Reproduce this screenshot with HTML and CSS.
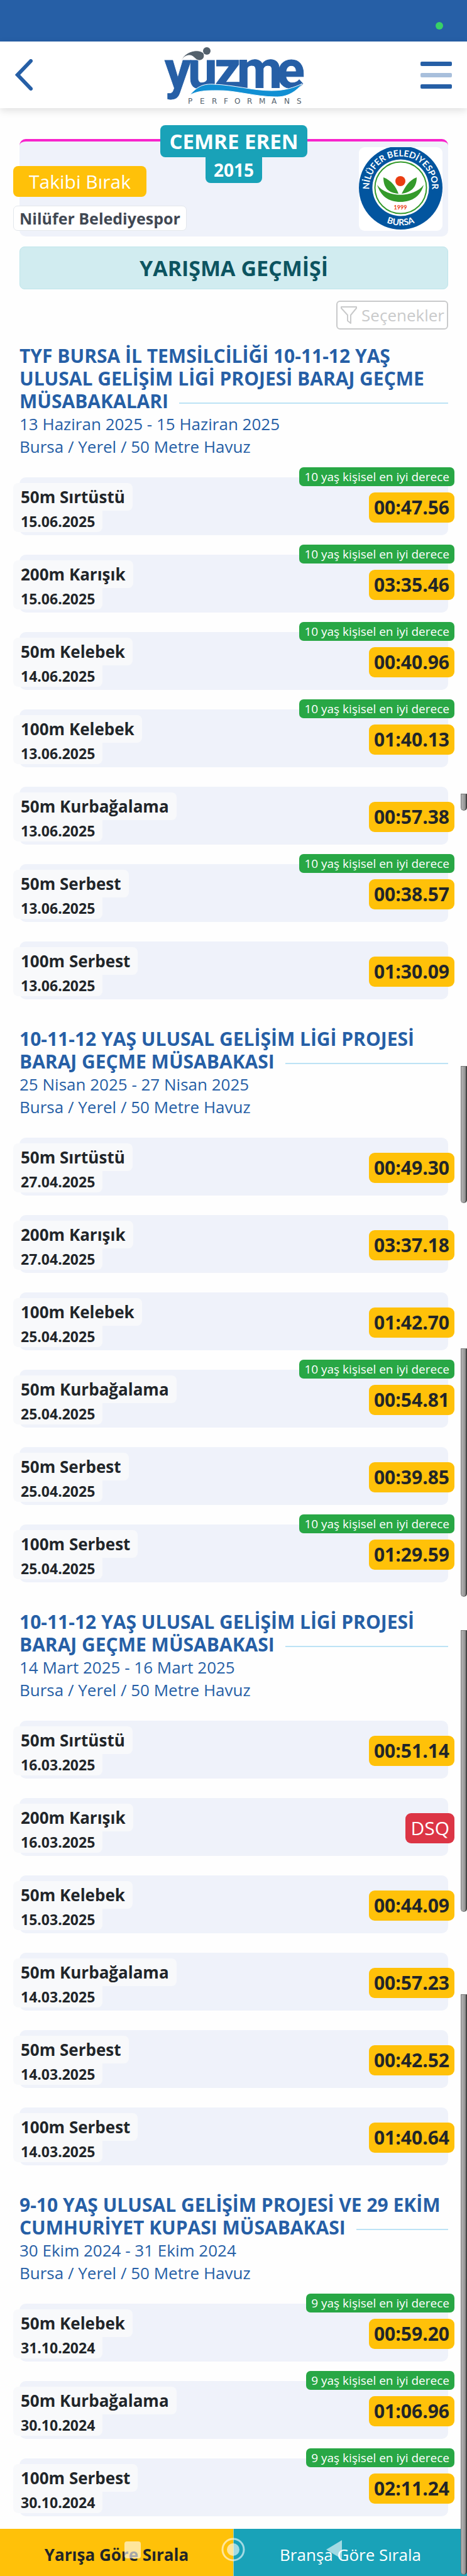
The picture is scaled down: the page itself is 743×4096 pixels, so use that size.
FILE: index.html
```html
<!DOCTYPE html>
<html lang="tr">
<head>
<meta charset="utf-8">
<meta name="viewport" content="width=device-width, initial-scale=1">
<title>Yarışma Geçmişi</title>
<link rel="stylesheet" href="styles.css">
</head>
<body>
<div class="status-bar"><span class="status-dot"></span></div>

<header class="topbar">
  <a class="back" href="#" aria-label="Geri">
    <svg width="28" height="50" viewBox="0 0 28 50"><path d="M25 3 L4 25 L25 47" fill="none" stroke="#265fa6" stroke-width="6" stroke-linecap="round"/></svg>
  </a>
  <svg class="brand" width="220" height="92" viewBox="0 0 220 92" role="img" aria-label="Yüzme Performans">
    <text class="brand-word" x="0 37 79 115 178" y="67">yuzme</text>
    <path d="M26 25 C30 10 50 4 60 10 C66 14 62 24 54 23 C48 22 46 14 38 15 C32 16 29 19 26 25 Z" fill="#54616c" stroke="#fff" stroke-width="1"/>
    <circle cx="67" cy="8" r="6" fill="#54616c"/>
    <path d="M40 78 C52 64 62 60 78 61 C110 62 140 71 170 71 C192 71 206 66 219 60 C210 72 195 82 176 81 C145 81 110 70 84 71 C66 71 54 71 40 78 Z" fill="#118fd3" stroke="#fff" stroke-width="1"/>
    <text class="brand-sub" y="92" x="37 56 75 94 111 131 150 170 190 210">PERFORMANS</text>
  </svg>
  <button class="menu" type="button" aria-label="Menü"><span></span><span></span><span></span></button>
</header>

<main>
  <section class="profile">
    <div class="profile-id">
      <h1 class="profile-name">CEMRE EREN</h1>
      <span class="profile-year">2015</span>
    </div>
    <div class="profile-side">
      <button class="follow" type="button">Takibi Bırak</button>
      <span class="club">Nilüfer Belediyespor</span>
    </div>
    <svg class="club-logo" width="133" height="133" viewBox="0 0 133 133" role="img" aria-label="Nilüfer Belediyespor Bursa">
      <defs>
        <path id="arc-top" d="M17.3 73.4 A50 50 0 1 1 115.7 73.4"/>
        <path id="arc-bottom" d="M6.5 64.5 A60 60 0 0 0 126.5 64.5"/>
      </defs>
      <rect width="133" height="133" fill="#fff"/>
      <circle cx="66.5" cy="64.5" r="66.5" fill="#02559f"/>
      <circle cx="66.5" cy="64.5" r="45" fill="#fff"/>
      <circle cx="66.5" cy="64.5" r="41" fill="none" stroke="#349a2b" stroke-width="2"/>
      <circle cx="66" cy="54" r="8" fill="#ea3d12"/>
      <path d="M39 48 C52 53 59 63 63 74 C48 73 39 66 39 48 Z" fill="#349a2b"/>
      <path d="M92 48 C79 53 74 63 68 74 C83 72 92 64 92 48 Z" fill="#349a2b"/>
      <path d="M29 60 C45 81 87 81 103 60 C98 78 85 87 66 87 C47 87 35 78 29 60 Z" fill="#349a2b"/>
      <text class="logo-year" x="66" y="99">1999</text>
      <text class="logo-text"><textPath href="#arc-top" startOffset="50%">NİLÜFER BELEDİYESPOR</textPath></text>
      <text class="logo-text"><textPath href="#arc-bottom" startOffset="50%">BURSA</textPath></text>
    </svg>
  </section>

  <h2 class="page-title">YARIŞMA GEÇMİŞİ</h2>

  <button class="options" type="button">
    <svg width="28" height="30" viewBox="0 0 28 30"><path d="M2 2 H26 V4 L17 15 V28 L12 24 V15 L2 4 Z" fill="none" stroke="#c9cacb" stroke-width="2" stroke-linejoin="round"/></svg>
    Seçenekler
  </button>

  <section class="meet">
    <h3>TYF BURSA İL TEMSİLCİLİĞİ 10-11-12 YAŞ ULUSAL GELİŞİM LİGİ PROJESİ BARAJ GEÇME MÜSABAKALARI</h3>
    <p>13 Haziran 2025 - 15 Haziran 2025</p>
    <p>Bursa / Yerel / 50 Metre Havuz</p>
    <ul class="races">
      <li><div><b class="event">50m Sırtüstü</b><time>15.06.2025</time></div><span class="best">10 yaş kişisel en iyi derece</span><strong class="result">00:47.56</strong></li>
      <li><div><b class="event">200m Karışık</b><time>15.06.2025</time></div><span class="best">10 yaş kişisel en iyi derece</span><strong class="result">03:35.46</strong></li>
      <li><div><b class="event">50m Kelebek</b><time>14.06.2025</time></div><span class="best">10 yaş kişisel en iyi derece</span><strong class="result">00:40.96</strong></li>
      <li><div><b class="event">100m Kelebek</b><time>13.06.2025</time></div><span class="best">10 yaş kişisel en iyi derece</span><strong class="result">01:40.13</strong></li>
      <li><div><b class="event">50m Kurbağalama</b><time>13.06.2025</time></div><strong class="result">00:57.38</strong></li>
      <li><div><b class="event">50m Serbest</b><time>13.06.2025</time></div><span class="best">10 yaş kişisel en iyi derece</span><strong class="result">00:38.57</strong></li>
      <li><div><b class="event">100m Serbest</b><time>13.06.2025</time></div><strong class="result">01:30.09</strong></li>
    </ul>
  </section>

  <section class="meet">
    <h3>10-11-12 YAŞ ULUSAL GELİŞİM LİGİ PROJESİ BARAJ GEÇME MÜSABAKASI</h3>
    <p>25 Nisan 2025 - 27 Nisan 2025</p>
    <p>Bursa / Yerel / 50 Metre Havuz</p>
    <ul class="races">
      <li><div><b class="event">50m Sırtüstü</b><time>27.04.2025</time></div><strong class="result">00:49.30</strong></li>
      <li><div><b class="event">200m Karışık</b><time>27.04.2025</time></div><strong class="result">03:37.18</strong></li>
      <li><div><b class="event">100m Kelebek</b><time>25.04.2025</time></div><strong class="result">01:42.70</strong></li>
      <li><div><b class="event">50m Kurbağalama</b><time>25.04.2025</time></div><span class="best">10 yaş kişisel en iyi derece</span><strong class="result">00:54.81</strong></li>
      <li><div><b class="event">50m Serbest</b><time>25.04.2025</time></div><strong class="result">00:39.85</strong></li>
      <li><div><b class="event">100m Serbest</b><time>25.04.2025</time></div><span class="best">10 yaş kişisel en iyi derece</span><strong class="result">01:29.59</strong></li>
    </ul>
  </section>

  <section class="meet">
    <h3>10-11-12 YAŞ ULUSAL GELİŞİM LİGİ PROJESİ BARAJ GEÇME MÜSABAKASI</h3>
    <p>14 Mart 2025 - 16 Mart 2025</p>
    <p>Bursa / Yerel / 50 Metre Havuz</p>
    <ul class="races">
      <li><div><b class="event">50m Sırtüstü</b><time>16.03.2025</time></div><strong class="result">00:51.14</strong></li>
      <li><div><b class="event">200m Karışık</b><time>16.03.2025</time></div><strong class="result dsq">DSQ</strong></li>
      <li><div><b class="event">50m Kelebek</b><time>15.03.2025</time></div><strong class="result">00:44.09</strong></li>
      <li><div><b class="event">50m Kurbağalama</b><time>14.03.2025</time></div><strong class="result">00:57.23</strong></li>
      <li><div><b class="event">50m Serbest</b><time>14.03.2025</time></div><strong class="result">00:42.52</strong></li>
      <li><div><b class="event">100m Serbest</b><time>14.03.2025</time></div><strong class="result">01:40.64</strong></li>
    </ul>
  </section>

  <section class="meet">
    <h3>9-10 YAŞ ULUSAL GELİŞİM PROJESİ VE 29 EKİM CUMHURİYET KUPASI MÜSABAKASI</h3>
    <p>30 Ekim 2024 - 31 Ekim 2024</p>
    <p>Bursa / Yerel / 50 Metre Havuz</p>
    <ul class="races">
      <li><div><b class="event">50m Kelebek</b><time>31.10.2024</time></div><span class="best">9 yaş kişisel en iyi derece</span><strong class="result">00:59.20</strong></li>
      <li><div><b class="event">50m Kurbağalama</b><time>30.10.2024</time></div><span class="best">9 yaş kişisel en iyi derece</span><strong class="result">01:06.96</strong></li>
      <li><div><b class="event">100m Serbest</b><time>30.10.2024</time></div><span class="best">9 yaş kişisel en iyi derece</span><strong class="result">02:11.24</strong></li>
    </ul>
  </section>
</main>

<footer class="sortbar">
  <button class="sort by-race" type="button">Yarışa Göre Sırala</button>
  <button class="sort by-stroke" type="button">Branşa Göre Sırala</button>
  <svg class="nav-keys" width="350" height="42" viewBox="0 0 350 42" aria-hidden="true">
    <rect x="1" y="8" width="26" height="27" rx="4" fill="#fff" fill-opacity=".6"/>
    <circle cx="174" cy="21" r="17" fill="none" stroke="#fff" stroke-opacity=".6" stroke-width="3"/>
    <circle cx="174" cy="21" r="10" fill="#fff" fill-opacity=".6"/>
    <path d="M347 6 V36 L322 21 Z" fill="#fff" fill-opacity=".6"/>
  </svg>
</footer>

<i class="thumb thumb-1"></i>
<i class="thumb thumb-2"></i>
<i class="thumb thumb-3"></i>
<i class="thumb thumb-4"></i>
<i class="thumb thumb-5"></i>
</body>
</html>
```
FILE: styles.css
```css
* { box-sizing: border-box; }

body {
  position: relative;
  margin: 0;
  background: #fefefe;
  color: #212529;
  font-family: "Open Sans", "Noto Sans", sans-serif;
}

button { border: 0; margin: 0; padding: 0; font-family: inherit; }

h1, h2, h3, p, ul { margin: 0; padding: 0; }

.status-bar {
  display: flex;
  justify-content: flex-end;
  height: 66px;
  padding: 35px 38px 0;
  background: #265fa6;
}
.status-dot { width: 12px; height: 12px; border-radius: 50%; background: #38d166; }

.topbar {
  display: flex;
  align-items: center;
  justify-content: space-between;
  height: 106px;
  padding: 0 24px;
  background: #fff;
  box-shadow: 0 4px 12px rgba(0, 0, 0, .12);
}
.back, .menu { display: flex; width: 50px; }
.brand { overflow: visible; }
.brand-word {
  font-family: Roboto, sans-serif;
  font-size: 83px;
  font-weight: 700;
  fill: #265fa6;
  stroke: #265fa6;
  stroke-width: 1px;
}
.brand-sub { font-family: "DejaVu Sans", sans-serif; font-size: 12px; fill: #54616c; }
.menu { flex-direction: column; gap: 11px; background: none; }
.menu span { width: 50px; height: 7px; border-radius: 2px; background: #265fa6; }
.menu span:nth-child(2) { background: #a8bfdc; }

main { padding: 49px 30px 20px 31px; }

.profile {
  position: relative;
  display: flex;
  align-items: flex-end;
  justify-content: space-between;
  height: 155px;
  padding: 0 9px 9px 0;
  border-top: 4px solid #f824cc;
  border-radius: 10px;
  background: #eff2fa;
}
.profile-id {
  position: absolute;
  top: -26px;
  left: 0;
  right: 0;
  display: flex;
  flex-direction: column;
  align-items: center;
  color: #fff;
  font-weight: 700;
}
.profile-name {
  padding: 0 14px;
  border-radius: 8px;
  background: #19a2b8;
  font-size: 33px;
  line-height: 51px;
}
.profile-year {
  padding: 0 13px;
  border-radius: 0 0 8px 8px;
  background: #19a2b8;
  font-size: 28px;
  line-height: 41px;
}
.profile-side {
  position: relative;
  display: flex;
  flex-direction: column;
  align-items: flex-start;
  gap: 14px;
  margin-left: -10px;
}
.follow {
  padding: 0 25px;
  border-radius: 8px;
  background: #ffc109;
  color: #fff;
  font-size: 30px;
  line-height: 49px;
}
.club {
  padding: 0 9px;
  border: 1px solid #e3e7ec;
  border-radius: 7px;
  background: #fff;
  color: #414853;
  font-size: 25px;
  font-weight: 700;
  line-height: 38px;
}
.club-logo { border-radius: 9px; }
.logo-text { font-family: Lato, sans-serif; font-size: 14px; font-weight: 700; fill: #fff; text-anchor: middle; }
.logo-year { font-family: Lato, sans-serif; font-size: 9px; font-weight: 700; fill: #ea3d12; text-anchor: middle; }

.page-title {
  margin-top: 16px;
  border: 1px solid #bee5eb;
  border-radius: 8px;
  background: #d1ecf0;
  color: #0c5460;
  font-size: 34px;
  line-height: 66px;
  text-align: center;
}

.options {
  display: flex;
  align-items: center;
  gap: 6px;
  margin: 18px 0 0 auto;
  padding: 0 4px;
  border: 2px solid #c9cacb;
  border-radius: 6px;
  background: #fff;
  color: #c9cacb;
  font-size: 26px;
  line-height: 42px;
}

.meet { margin-top: 41px; color: #265fa6; font-size: 26px; line-height: 36px; }
.options + .meet { margin-top: 20px; }
.meet h3 {
  overflow: hidden;
  margin-bottom: -4px;
  padding: 4px 0;
  font-size: 30px;
  line-height: 36px;
}
.meet h3::after {
  content: "";
  display: inline-block;
  width: 100%;
  height: 2px;
  margin: 0 -100% 0 17px;
  background: #bce3f5;
  vertical-align: middle;
}

.races {
  display: flex;
  flex-direction: column;
  gap: 31px;
  padding-top: 31px;
  list-style: none;
}
.races li {
  position: relative;
  display: flex;
  align-items: flex-start;
  justify-content: space-between;
  height: 92px;
  border-radius: 10px;
  background: #eff2fa;
  color: #212529;
}
.races li > div {
  display: flex;
  flex-direction: column;
  align-items: flex-start;
  margin: 9px 0 0 -10px;
}
.event, time { padding: 0 12px; background: #f8f9fb; font-weight: 700; }
.event { border-radius: 8px 8px 8px 0; font-size: 26px; line-height: 44px; }
time { border-radius: 0 0 8px 8px; font-size: 23px; line-height: 34px; }
.best {
  position: absolute;
  top: -16px;
  right: -10px;
  padding: 0 8px;
  border-radius: 7px;
  background: #28a745;
  color: #fff;
  font-size: 19px;
  line-height: 30px;
}
.result {
  margin: 24px -10px 0 0;
  padding: 0 8px;
  border-radius: 9px;
  background: #ffc109;
  font-size: 30px;
  line-height: 48px;
}
.dsq { background: #dc3545; color: #fff; font-weight: 400; }

.sortbar { position: relative; display: flex; height: 76px; }
.sort { flex: 1; padding-top: 6px; font-size: 26px; line-height: 36px; }
.by-race { background: #ffc109; color: #212529; font-weight: 700; }
.by-stroke { border-left: 1px solid #9dd0c0; background: #19a2b8; color: #fff; }
.nav-keys { position: absolute; top: 12px; left: calc(50% - 175px); }

.thumb {
  position: absolute;
  right: 0;
  width: 10px;
  border: 1px solid #777;
  border-right: 2px solid #444;
  border-radius: 0 0 5px 5px;
  background: linear-gradient(90deg, #b5b5b5, #8c8c8c);
}
.thumb-1 { top: 1262px; height: 27px; }
.thumb-2 { top: 1695px; height: 218px; }
.thumb-3 { top: 2144px; height: 395px; }
.thumb-4 { top: 2592px; height: 448px; }
.thumb-5 { top: 3171px; height: 923px; }
```
